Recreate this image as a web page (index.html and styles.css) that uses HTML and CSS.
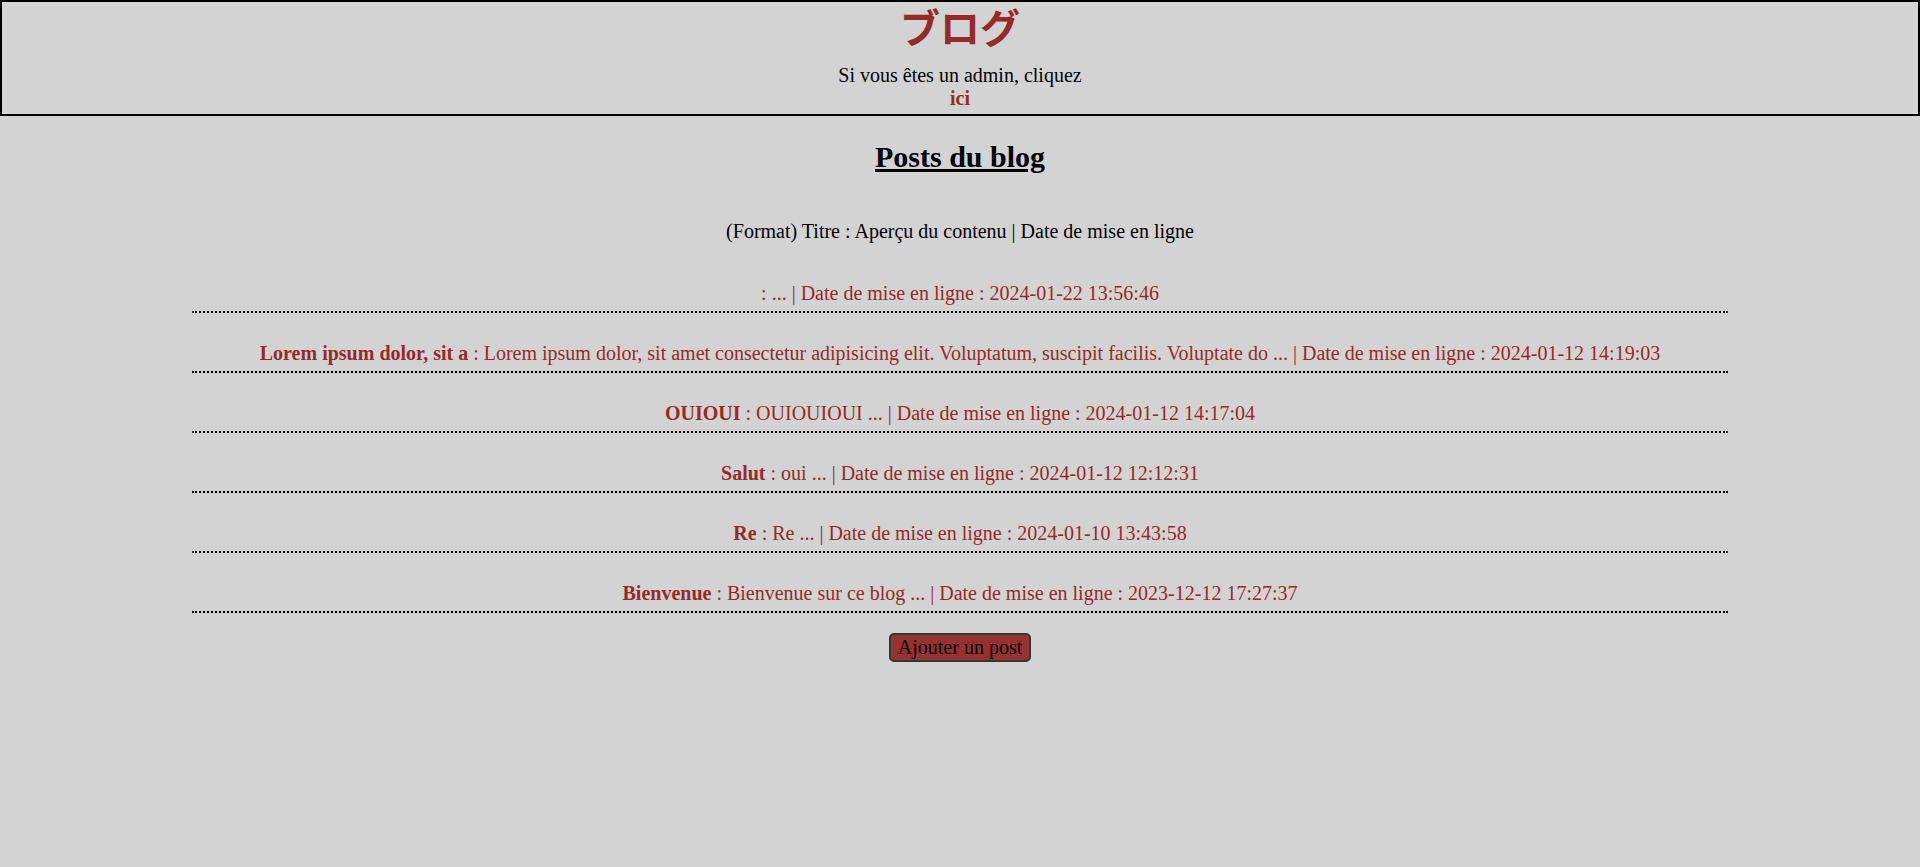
FILE: index.html
```html
<!DOCTYPE html>
<html lang="fr">
<head>
<meta charset="utf-8">
<title>ブログ</title>
<link rel="stylesheet" href="styles.css">
</head>
<body>
<header class="site-header">
  <h1 class="site-title">ブログ</h1>
  <p class="admin-note">Si vous êtes un admin, cliquez</p>
  <a class="admin-link" href="#">ici</a>
</header>
<main class="posts">
  <h2 class="posts-title">Posts du blog</h2>
  <p class="posts-format">(Format) Titre : Aperçu du contenu | Date de mise en ligne</p>
  <ul class="post-list">
    <li class="post"><a href="#"><b></b> : ... | Date de mise en ligne : 2024-01-22 13:56:46</a></li>
    <li class="post"><a href="#"><b>Lorem ipsum dolor, sit a</b> : Lorem ipsum dolor, sit amet consectetur adipisicing elit. Voluptatum, suscipit facilis. Voluptate do ... | Date de mise en ligne : 2024-01-12 14:19:03</a></li>
    <li class="post"><a href="#"><b>OUIOUI</b> : OUIOUIOUI ... | Date de mise en ligne : 2024-01-12 14:17:04</a></li>
    <li class="post"><a href="#"><b>Salut</b> : oui ... | Date de mise en ligne : 2024-01-12 12:12:31</a></li>
    <li class="post"><a href="#"><b>Re</b> : Re ... | Date de mise en ligne : 2024-01-10 13:43:58</a></li>
    <li class="post"><a href="#"><b>Bienvenue</b> : Bienvenue sur ce blog ... | Date de mise en ligne : 2023-12-12 17:27:37</a></li>
  </ul>
  <div class="actions">
    <button class="add-btn" type="button">Ajouter un post</button>
  </div>
</main>
</body>
</html>
```

FILE: styles.css
```css
html, body {
  margin: 0;
  padding: 0;
}

body {
  background: #d3d3d3;
  color: #000;
  font-family: "Liberation Serif", "Times New Roman", serif;
  font-size: 20px;
  line-height: 23px;
}

.site-header {
  border: 2px solid #000;
  text-align: center;
  padding: 0 0 4px;
  display: flex;
  flex-direction: column;
  align-items: center;
}

.site-title {
  margin: 0;
  font-family: "Noto Sans CJK JP", "Noto Sans", sans-serif;
  font-size: 40px;
  line-height: 48px;
  font-weight: 700;
  color: #952a2a;
}

.admin-note {
  margin: 14px 0 0;
}

.admin-link {
  font-weight: 700;
  color: #952a2a;
  text-decoration: none;
}

.posts {
  width: 80%;
  margin: 0 auto;
  text-align: center;
}

.posts-title {
  margin: 24px 0 0;
  font-size: 30px;
  line-height: 34.5px;
  font-weight: 700;
  text-decoration: underline;
}

.posts-format {
  margin: 45px 0 10px;
}

.post-list {
  list-style: none;
  margin: 0;
  padding: 0;
}

.post {
  padding: 29px 0 6px;
  border-bottom: 2px dotted #000;
}

.post a {
  color: #952a2a;
  text-decoration: none;
}

.actions {
  margin-top: 20px;
  display: flex;
  justify-content: center;
}

.add-btn {
  font-family: "Liberation Serif", "Times New Roman", serif;
  font-size: 20px;
  line-height: 23px;
  color: #000;
  background: #993030;
  border: 2px solid #333;
  border-radius: 5px;
  box-shadow: inset 0 0 2px #666;
  padding: 1px 7px;
  cursor: pointer;
}
```
